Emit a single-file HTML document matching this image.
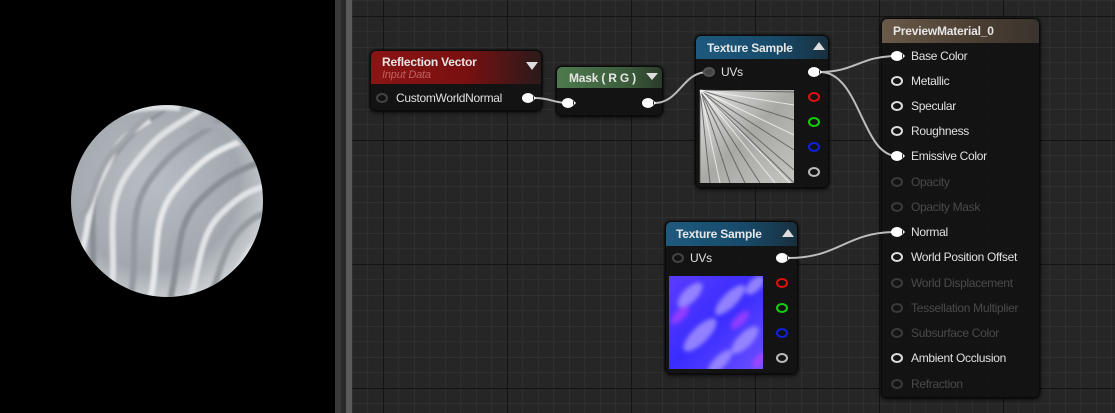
<!DOCTYPE html>
<html><head><meta charset="utf-8"><style>
*{margin:0;padding:0;box-sizing:border-box}
body{width:1115px;height:413px;overflow:hidden;background:#000;position:relative;font-family:"Liberation Sans",sans-serif}
.node{position:absolute;background:rgba(18,18,18,0.93);border-radius:6px;box-shadow:0 0 2px #000,0 2px 4px rgba(0,0,0,.6);border:1px solid #0a0a0a}
.hd{position:absolute;left:0;right:0;top:0;border-radius:5px 5px 0 0;color:#e6e6e6;font-weight:bold;font-size:12px;padding-left:10px;letter-spacing:-0.2px}
.t{position:absolute;color:#e0e0e0;font-size:12px;white-space:nowrap;letter-spacing:-0.3px}
.dim{color:#4a4a4a}
.tri{position:absolute;width:0;height:0;border-left:6px solid transparent;border-right:6px solid transparent}
</style></head><body>
<svg width="1115" height="413" style="position:absolute;left:0;top:0">
<defs>
<pattern id="minor" x="383" y="16" width="15.5" height="15.5" patternUnits="userSpaceOnUse">
<path d="M0 0H15.5M0 0V15.5" stroke="#353535" stroke-width="1.2" fill="none"/></pattern>
<pattern id="major" x="383" y="16" width="124" height="124" patternUnits="userSpaceOnUse">
<path d="M0 0H124M0 0V124" stroke="#141414" stroke-width="2" fill="none"/></pattern>
<radialGradient id="sph" cx="0.42" cy="0.4" r="0.65"><stop offset="0" stop-color="#b8bec4"/><stop offset="0.7" stop-color="#a2a8ae"/><stop offset="1" stop-color="#d0d4d8"/></radialGradient>
<clipPath id="sc"><circle cx="167" cy="201" r="96"/></clipPath>
<filter id="bl"><feGaussianBlur stdDeviation="1.2"/></filter>
</defs>
<rect x="0" y="0" width="335" height="413" fill="#000"/>
<rect x="335" y="0" width="6" height="413" fill="#3a3a3a"/>
<rect x="341" y="0" width="5" height="413" fill="#2a2a2a"/>
<rect x="346" y="0" width="6" height="413" fill="#5a5a5a"/>
<rect x="352" y="0" width="763" height="413" fill="#262626"/>
<rect x="352" y="0" width="763" height="413" fill="url(#minor)"/>
<rect x="352" y="0" width="763" height="413" fill="url(#major)"/>
<circle cx="167" cy="201" r="96" fill="url(#sph)"/>
<g clip-path="url(#sc)" fill="none" stroke-width="6" filter="url(#bl)">
<path d="M90 300C100 240 80 200 110 160S150 120 170 105" stroke="#8a9096"/>
<path d="M110 300C120 250 100 210 130 170S170 130 200 110" stroke="#dfe2e5"/>
<path d="M130 300C140 250 125 215 150 180S195 140 220 120" stroke="#949aa0"/>
<path d="M150 300C160 260 150 220 175 190S215 150 245 140" stroke="#e6e8ea"/>
<path d="M170 300C180 260 175 225 200 200S240 170 265 160" stroke="#8a9096"/>
<path d="M190 300C200 265 200 235 220 215S250 190 270 185" stroke="#e0e3e6"/>
<path d="M210 300C220 270 225 245 240 230S260 215 275 210" stroke="#969ca2"/>
<path d="M75 270C90 240 85 210 100 180S115 140 150 120" stroke="#e4e6e8"/>
<path d="M80 220C95 200 95 170 115 150S140 115 180 100" stroke="#a0a6ac"/>
<path d="M230 290C240 265 245 250 260 240" stroke="#dadde0"/>
<path d="M190 130C210 120 230 125 250 150" stroke="#a4aab0"/>
<path d="M100 120C120 110 150 105 180 108" stroke="#e0e3e6"/>
</g>
</svg>

<div class="node" style="left:370px;top:50px;width:172px;height:61px">
<div class="hd" style="height:33px;background:linear-gradient(90deg,#8a1414 0%,#7a1010 55%,#2a1a1a 100%)">
<div style="position:absolute;left:11px;top:4px">Reflection Vector</div>
<div style="position:absolute;left:11px;top:18px;font-weight:normal;font-style:italic;font-size:11px;color:#c06060">Input Data</div>
</div>
<div class="tri" style="left:155px;top:11px;border-top:8px solid #ddd"></div>
</div>
<div class="node" style="left:556px;top:66px;width:107px;height:50px">
<div class="hd" style="height:21px;background:linear-gradient(90deg,#4e7a4e,#3a5a3a 70%,#2a3a2a)"><div style="position:absolute;left:12px;top:4px">Mask ( R G )</div></div>
<div class="tri" style="left:89px;top:6px;border-top:7px solid #ddd"></div>
</div>
<div class="node" style="left:695px;top:35px;width:134px;height:153px">
<div class="hd" style="height:23px;background:linear-gradient(90deg,#1e5a7e,#174a6a 60%,#18303e)"><div style="position:absolute;left:11px;top:5px">Texture Sample</div></div>
<div class="tri" style="left:117px;top:6px;border-bottom:8px solid #ddd"></div>
</div>
<div class="node" style="left:665px;top:221px;width:133px;height:153px">
<div class="hd" style="height:24px;background:linear-gradient(90deg,#1e5a7e,#174a6a 60%,#18303e)"><div style="position:absolute;left:10px;top:5px">Texture Sample</div></div>
<div class="tri" style="left:116px;top:7px;border-bottom:8px solid #ddd"></div>
</div>
<div class="node" style="left:881px;top:18px;width:159px;height:380px">
<div class="hd" style="height:24px;background:linear-gradient(90deg,#6a5a48,#4a3e32 60%,#3a342e)"><div style="position:absolute;left:11px;top:5px">PreviewMaterial_0</div></div>
</div>

<svg width="1115" height="413" style="position:absolute;left:0;top:0">
<defs>
<linearGradient id="tx1" x1="0" y1="0" x2="1" y2="1"><stop offset="0" stop-color="#e8e8e8"/><stop offset="0.5" stop-color="#a8a8a4"/><stop offset="1" stop-color="#c4c4c0"/></linearGradient>
<linearGradient id="tx2" x1="0" y1="0" x2="1" y2="1"><stop offset="0" stop-color="#5a3cff"/><stop offset="0.5" stop-color="#3a2cff"/><stop offset="1" stop-color="#6a50ff"/></linearGradient>
<filter id="b2"><feGaussianBlur stdDeviation="2"/></filter>
<clipPath id="c2"><rect x="669" y="276" width="94" height="93"/></clipPath>
</defs>
<rect x="700" y="90" width="94" height="93" fill="url(#tx1)"/>
<g stroke-width="1" opacity="0.8">
<path d="M700 90L794 150M700 90L794 183M700 90L760 183M700 90L730 183M700 90L710 183M700 90L794 120M700 90L794 170M700 90L745 183M700 90L700 183M700 90L794 92" stroke="#555"/>
<path d="M700 90L794 135M700 90L775 183M700 90L720 183M700 90L794 105M700 90L790 183" stroke="#f4f4f4"/>
</g>
<rect x="669" y="276" width="94" height="93" fill="url(#tx2)"/>
<g clip-path="url(#c2)" filter="url(#b2)">
<g fill="#a090ff" opacity="0.85">
<ellipse cx="690" cy="295" rx="16" ry="7" transform="rotate(-45 690 295)"/>
<ellipse cx="730" cy="300" rx="20" ry="7" transform="rotate(-45 730 300)"/>
<ellipse cx="700" cy="335" rx="22" ry="8" transform="rotate(-45 700 335)"/>
<ellipse cx="745" cy="340" rx="18" ry="7" transform="rotate(-45 745 340)"/>
<ellipse cx="720" cy="362" rx="16" ry="6" transform="rotate(-45 720 362)"/>
<ellipse cx="755" cy="285" rx="12" ry="6" transform="rotate(-45 755 285)"/>
</g>
<g fill="#c040ff" opacity="0.6">
<ellipse cx="680" cy="315" rx="12" ry="5" transform="rotate(-45 680 315)"/>
<ellipse cx="740" cy="320" rx="12" ry="5" transform="rotate(-45 740 320)"/>
<ellipse cx="760" cy="360" rx="10" ry="5" transform="rotate(-45 760 360)"/>
</g>
</g>
<g fill="none" stroke="#bdbdbd" stroke-width="2">
<path d="M534 98C552 98 552 103 569 103"/>
<path d="M654 103C680 103 682 72 708 72"/>
<path d="M820 72C855 72 860 56 897 56"/>
<path d="M820 72C860 72 862 156 897 156"/>
<path d="M788 258C840 258 845 232 897 232"/>
</g>
<g fill="#fff">
<path d="M522 98a6 5 0 1 0 12 0a6 5 0 1 0-12 0zM533 95l3 3-3 3z"/>
<path d="M562 103a6 5 0 1 0 12 0a6 5 0 1 0-12 0zM573 100l3 3-3 3z"/>
<path d="M642 103a6 5 0 1 0 12 0a6 5 0 1 0-12 0zM653 100l3 3-3 3z"/>
<path d="M808 72a6 5 0 1 0 12 0a6 5 0 1 0-12 0zM819 69l3 3-3 3z"/>
<path d="M776 258a6 5 0 1 0 12 0a6 5 0 1 0-12 0zM787 255l3 3-3 3z"/>
<path d="M891 56a6 5 0 1 0 12 0a6 5 0 1 0-12 0zM902 53l3 3-3 3z"/>
<path d="M891 156a6 5 0 1 0 12 0a6 5 0 1 0-12 0zM902 153l3 3-3 3z"/>
<path d="M891 232a6 5 0 1 0 12 0a6 5 0 1 0-12 0zM902 229l3 3-3 3z"/>
</g>
<g fill="none" stroke-width="2">
<ellipse cx="382" cy="98" rx="5" ry="4" stroke="#444"/>
<ellipse cx="709" cy="72" rx="5" ry="4" stroke="#555" fill="#444"/>
<ellipse cx="678" cy="258" rx="5" ry="4" stroke="#444"/>
<ellipse cx="814" cy="97" rx="5" ry="4" stroke="#e01010"/>
<ellipse cx="814" cy="122" rx="5" ry="4" stroke="#10d010"/>
<ellipse cx="814" cy="147" rx="5" ry="4" stroke="#1020e0"/>
<ellipse cx="814" cy="172" rx="5" ry="4" stroke="#bbb"/>
<ellipse cx="782" cy="283" rx="5" ry="4" stroke="#e01010"/>
<ellipse cx="782" cy="308" rx="5" ry="4" stroke="#10d010"/>
<ellipse cx="782" cy="333" rx="5" ry="4" stroke="#1020e0"/>
<ellipse cx="782" cy="358" rx="5" ry="4" stroke="#bbb"/>
<g stroke="#ddd">
<ellipse cx="897" cy="81" rx="5" ry="4"/><ellipse cx="897" cy="106" rx="5" ry="4"/><ellipse cx="897" cy="131" rx="5" ry="4"/><ellipse cx="897" cy="257" rx="5" ry="4"/><ellipse cx="897" cy="358" rx="5" ry="4"/>
</g>
<g stroke="#3a3a3a">
<ellipse cx="897" cy="182" rx="5" ry="4"/><ellipse cx="897" cy="207" rx="5" ry="4"/><ellipse cx="897" cy="283" rx="5" ry="4"/><ellipse cx="897" cy="308" rx="5" ry="4"/><ellipse cx="897" cy="333" rx="5" ry="4"/><ellipse cx="897" cy="384" rx="5" ry="4"/>
</g>
</g>
</svg>

<div class="t" style="left:396px;top:91px">CustomWorldNormal</div>
<div class="t" style="left:721px;top:65px">UVs</div>
<div class="t" style="left:690px;top:251px">UVs</div>
<div class="t" style="left:911px;top:49px">Base Color</div>
<div class="t" style="left:911px;top:74px">Metallic</div>
<div class="t" style="left:911px;top:99px">Specular</div>
<div class="t" style="left:911px;top:124px">Roughness</div>
<div class="t" style="left:911px;top:149px">Emissive Color</div>
<div class="t dim" style="left:911px;top:175px">Opacity</div>
<div class="t dim" style="left:911px;top:200px">Opacity Mask</div>
<div class="t" style="left:911px;top:225px">Normal</div>
<div class="t" style="left:911px;top:250px">World Position Offset</div>
<div class="t dim" style="left:911px;top:276px">World Displacement</div>
<div class="t dim" style="left:911px;top:301px">Tessellation Multiplier</div>
<div class="t dim" style="left:911px;top:326px">Subsurface Color</div>
<div class="t" style="left:911px;top:351px">Ambient Occlusion</div>
<div class="t dim" style="left:911px;top:377px">Refraction</div>
</body></html>
